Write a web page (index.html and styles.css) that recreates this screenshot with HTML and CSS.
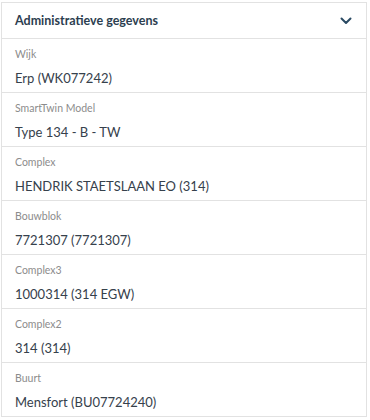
FILE: index.html
```html
<html>
<head>
  <meta charset="UTF-8">
  <title>Administratieve gegevens</title>
  <link rel="stylesheet" href="styles.css">
</head>
<body>
  <div class="panel">
    <div class="panel-header">
      <span class="panel-title">Administratieve gegevens</span>
      <svg class="chevron" width="12" height="8" viewBox="0 0 12 8">
        <path d="M1.5 1.5 L6 6 L10.5 1.5" fill="none" stroke="#2a4a63" stroke-width="2" stroke-linecap="round" stroke-linejoin="round"/>
      </svg>
    </div>
    <div class="field">
      <div class="field-label">Wijk</div>
      <div class="field-value">Erp (WK077242)</div>
    </div>
    <div class="field">
      <div class="field-label">SmartTwin Model</div>
      <div class="field-value">Type 134 - B - TW</div>
    </div>
    <div class="field">
      <div class="field-label">Complex</div>
      <div class="field-value">HENDRIK STAETSLAAN EO (314)</div>
    </div>
    <div class="field">
      <div class="field-label">Bouwblok</div>
      <div class="field-value">7721307 (7721307)</div>
    </div>
    <div class="field">
      <div class="field-label">Complex3</div>
      <div class="field-value">1000314 (314 EGW)</div>
    </div>
    <div class="field">
      <div class="field-label">Complex2</div>
      <div class="field-value">314 (314)</div>
    </div>
    <div class="field">
      <div class="field-label">Buurt</div>
      <div class="field-value">Mensfort (BU07724240)</div>
    </div>
  </div>
</body>
</html>
```

FILE: styles.css
```css
body {
    margin: 0;
    padding: 2px 3px 0 1px;
    font-family: 'Lato', sans-serif;
    background-color: #ffffff;
}

.panel {
    border: 1px solid #e2e2e2;
    border-bottom: none;
    background-color: #ffffff;
}

/* Header */
.panel-header {
    display: flex;
    justify-content: space-between;
    align-items: center;
    height: 35px;
    padding: 0 14px 0 13px;
    border-bottom: 1px solid #e2e2e2;
}

.panel-title {
    font-size: 12.5px;
    font-weight: 700;
    color: #2c3e50;
}

.chevron {
    display: block;
}

/* Fields */
.field {
    height: 53px;
    padding: 0 13px;
    border-bottom: 1px solid #e2e2e2;
}

.field-label {
    padding-top: 7px;
    font-size: 10.5px;
    line-height: 16px;
    color: #8c8c8c;
}

.field-value {
    margin-top: 7px;
    font-size: 13px;
    line-height: 18px;
    color: #36414c;
}
```
